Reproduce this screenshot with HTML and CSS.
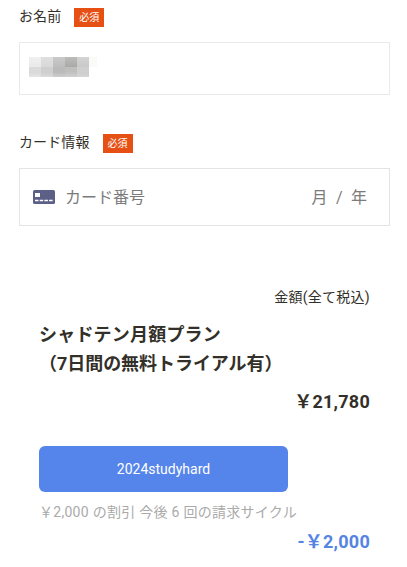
FILE: index.html
```html
<!DOCTYPE html>
<html lang="ja">
<head>
    <meta charset="UTF-8">
    <meta name="viewport" content="width=device-width, initial-scale=1.0">
    <title>お支払い情報</title>
    <link rel="stylesheet" href="styles.css">
</head>
<body>
    <div class="label">お名前 <span class="required">必須</span></div>
    <div class="field name-field">
        <div class="mosaic">
            <span class="m1"></span><span class="m2"></span><span class="m3"></span><span class="m4"></span><span class="m5"></span><span class="m6"></span>
            <span class="m7"></span><span class="m8"></span><span class="m9"></span><span class="m10"></span><span class="m11"></span>
        </div>
    </div>

    <div class="label card-label">カード情報 <span class="required">必須</span></div>
    <div class="field card-field">
        <svg class="card-icon" width="24" height="16" viewBox="0 0 24 16">
            <rect x="1" y="1" width="22" height="14" rx="1.5" fill="#5c6086"/>
            <rect x="3" y="4" width="5" height="4" fill="#fff"/>
            <path d="M3 11.5h3.5M7.7 11.5h3.5M12.4 11.5h3.5M17.1 11.5h3.5" stroke="#fff" stroke-width="1.4"/>
        </svg>
        <span>カード番号</span>
        <span class="expiry">月 / 年</span>
    </div>

    <div class="summary">
        <div class="amount-label">金額(全て税込)</div>
        <div class="plan">シャドテン月額プラン<br><span class="trial">（7日間の無料トライアル有）</span></div>
        <div class="price">￥21,780</div>
        <div class="coupon">2024studyhard</div>
        <div class="discount-note">￥2,000 の割引 今後 6 回の請求サイクル</div>
        <div class="price discount">-￥2,000</div>
    </div>
</body>
</html>
```

FILE: styles.css
```css
* {
    box-sizing: border-box;
}

body {
    margin: 0;
    padding: 6px 17px 0 19px;
    background-color: #fff;
    color: #333029;
    font-family: Roboto, "Noto Sans CJK JP", sans-serif;
    font-size: 14px;
    overflow: hidden;
}

.label {
    display: flex;
    height: 21px;
    line-height: 20px;
    gap: 13px;
    letter-spacing: 0.1px;
}

.required {
    width: 30px;
    height: 19px;
    margin-top: 2px;
    background-color: #e65014;
    color: #fff;
    font-size: 10px;
    line-height: 19px;
    text-align: center;
}

.field {
    border: 1px solid #e4e4e4;
}

.name-field {
    height: 53px;
    margin-top: 15px;
    padding: 14px 9px;
    border-color: #e9e9e9;
}

.mosaic {
    display: grid;
    grid-template-columns: repeat(5, 12px) 8px;
    grid-template-rows: 10px 10px;
}

.m1 { background: linear-gradient(#f0f0f0, #e9e9e9); }
.m2 { background: linear-gradient(#dfdfdf, #d8d8d8); }
.m3 { background: linear-gradient(#c9c9c9, #bdbdbd); }
.m4 { background: linear-gradient(#bcbcbb, #a9a9a8); }
.m5 { background: linear-gradient(#d3d3d3, #c9c9c9); }
.m6 { background: #fafaf9; }
.m7 { background: linear-gradient(#dadada 60%, #e5e5e5); }
.m8 { background: linear-gradient(#cfcfcf 60%, #dcdcdc); }
.m9 { background: linear-gradient(#bababa 50%, #cecece); }
.m10 { background: linear-gradient(#bfbfbf 50%, #d1d1d1); }
.m11 { background: linear-gradient(#cfcfcf 70%, #d6d6d6); }

.card-label {
    margin-top: 37px;
}

.card-field {
    display: flex;
    align-items: center;
    height: 58px;
    margin-top: 15px;
    padding: 0 22px 2px 13px;
    color: #7b7b7b;
    font-size: 16px;
}

.card-icon {
    margin: 2px 9px 0 -1px;
}

.expiry {
    margin-left: auto;
    word-spacing: 4.5px;
}

.summary {
    padding: 61px 20px 0;
}

.amount-label {
    letter-spacing: 0.25px;
    line-height: 20px;
    text-align: right;
}

.plan {
    margin-top: 13px;
    font-size: 18px;
    font-weight: 700;
    letter-spacing: 0.2px;
    line-height: 29px;
}

.trial {
    letter-spacing: -0.05px;
}

.price {
    margin-top: 10px;
    font-size: 18px;
    font-weight: 700;
    letter-spacing: 0.25px;
    line-height: 28px;
    text-align: right;
}

.coupon {
    width: 249px;
    height: 46px;
    margin-top: 30px;
    border-radius: 6px;
    background-color: #5584ea;
    color: #fff;
    line-height: 46px;
    text-align: center;
}

.discount-note {
    margin-top: 10px;
    color: #aaa;
    letter-spacing: 0.28px;
    line-height: 20px;
    white-space: nowrap;
}

.discount {
    margin-top: 6px;
    color: #5584e3;
}
```
